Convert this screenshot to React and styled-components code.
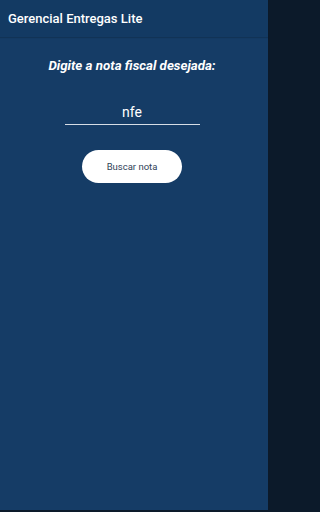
import styled, { createGlobalStyle } from "styled-components";

const GlobalStyle = createGlobalStyle`
  html, body {
    margin: 0;
    padding: 0;
    height: 100%;
    background: #0c1a2a;
  }
  #root {
    height: 100%;
  }
`;

const Screen = styled.div`
  box-sizing: border-box;
  width: 268px;
  height: 510px;
  display: flex;
  flex-direction: column;
  background: #153c66;
  font-family: Roboto, "Liberation Sans", sans-serif;
`;

const AppBar = styled.header`
  height: 37px;
  display: flex;
  align-items: center;
  padding: 0 8px;
  background: #133a63;
  box-shadow: 0 1px 1px rgba(0, 0, 0, 0.15);
`;

const Title = styled.h1`
  margin: 0;
  color: #ffffff;
  font-size: 13px;
  font-weight: 500;
`;

const Content = styled.main`
  display: flex;
  flex-direction: column;
  align-items: center;
  padding: 21px 4px 0 0;
`;

const Prompt = styled.p`
  margin: 0;
  color: #ffffff;
  font-size: 13.3px;
  font-weight: 700;
  font-style: italic;
`;

const NoteInput = styled.input`
  box-sizing: border-box;
  width: 135px;
  margin-top: 31px;
  padding: 0 0 4px;
  border: none;
  border-bottom: 1.5px solid #d6dde6;
  background: transparent;
  color: #ffffff;
  font-family: inherit;
  font-size: 14px;
  text-align: center;
  outline: none;
`;

const SearchButton = styled.button`
  width: 100px;
  height: 33px;
  margin-top: 25px;
  border: none;
  border-radius: 17px;
  background: #ffffff;
  color: #2f3f58;
  font-family: inherit;
  font-size: 9.5px;
  cursor: pointer;
`;

export default function App() {
  return (
    <>
      <GlobalStyle />
      <Screen>
        <AppBar>
          <Title>Gerencial Entregas Lite</Title>
        </AppBar>
        <Content>
          <Prompt>Digite a nota fiscal desejada:</Prompt>
          <NoteInput defaultValue="nfe" />
          <SearchButton>Buscar nota</SearchButton>
        </Content>
      </Screen>
    </>
  );
}
